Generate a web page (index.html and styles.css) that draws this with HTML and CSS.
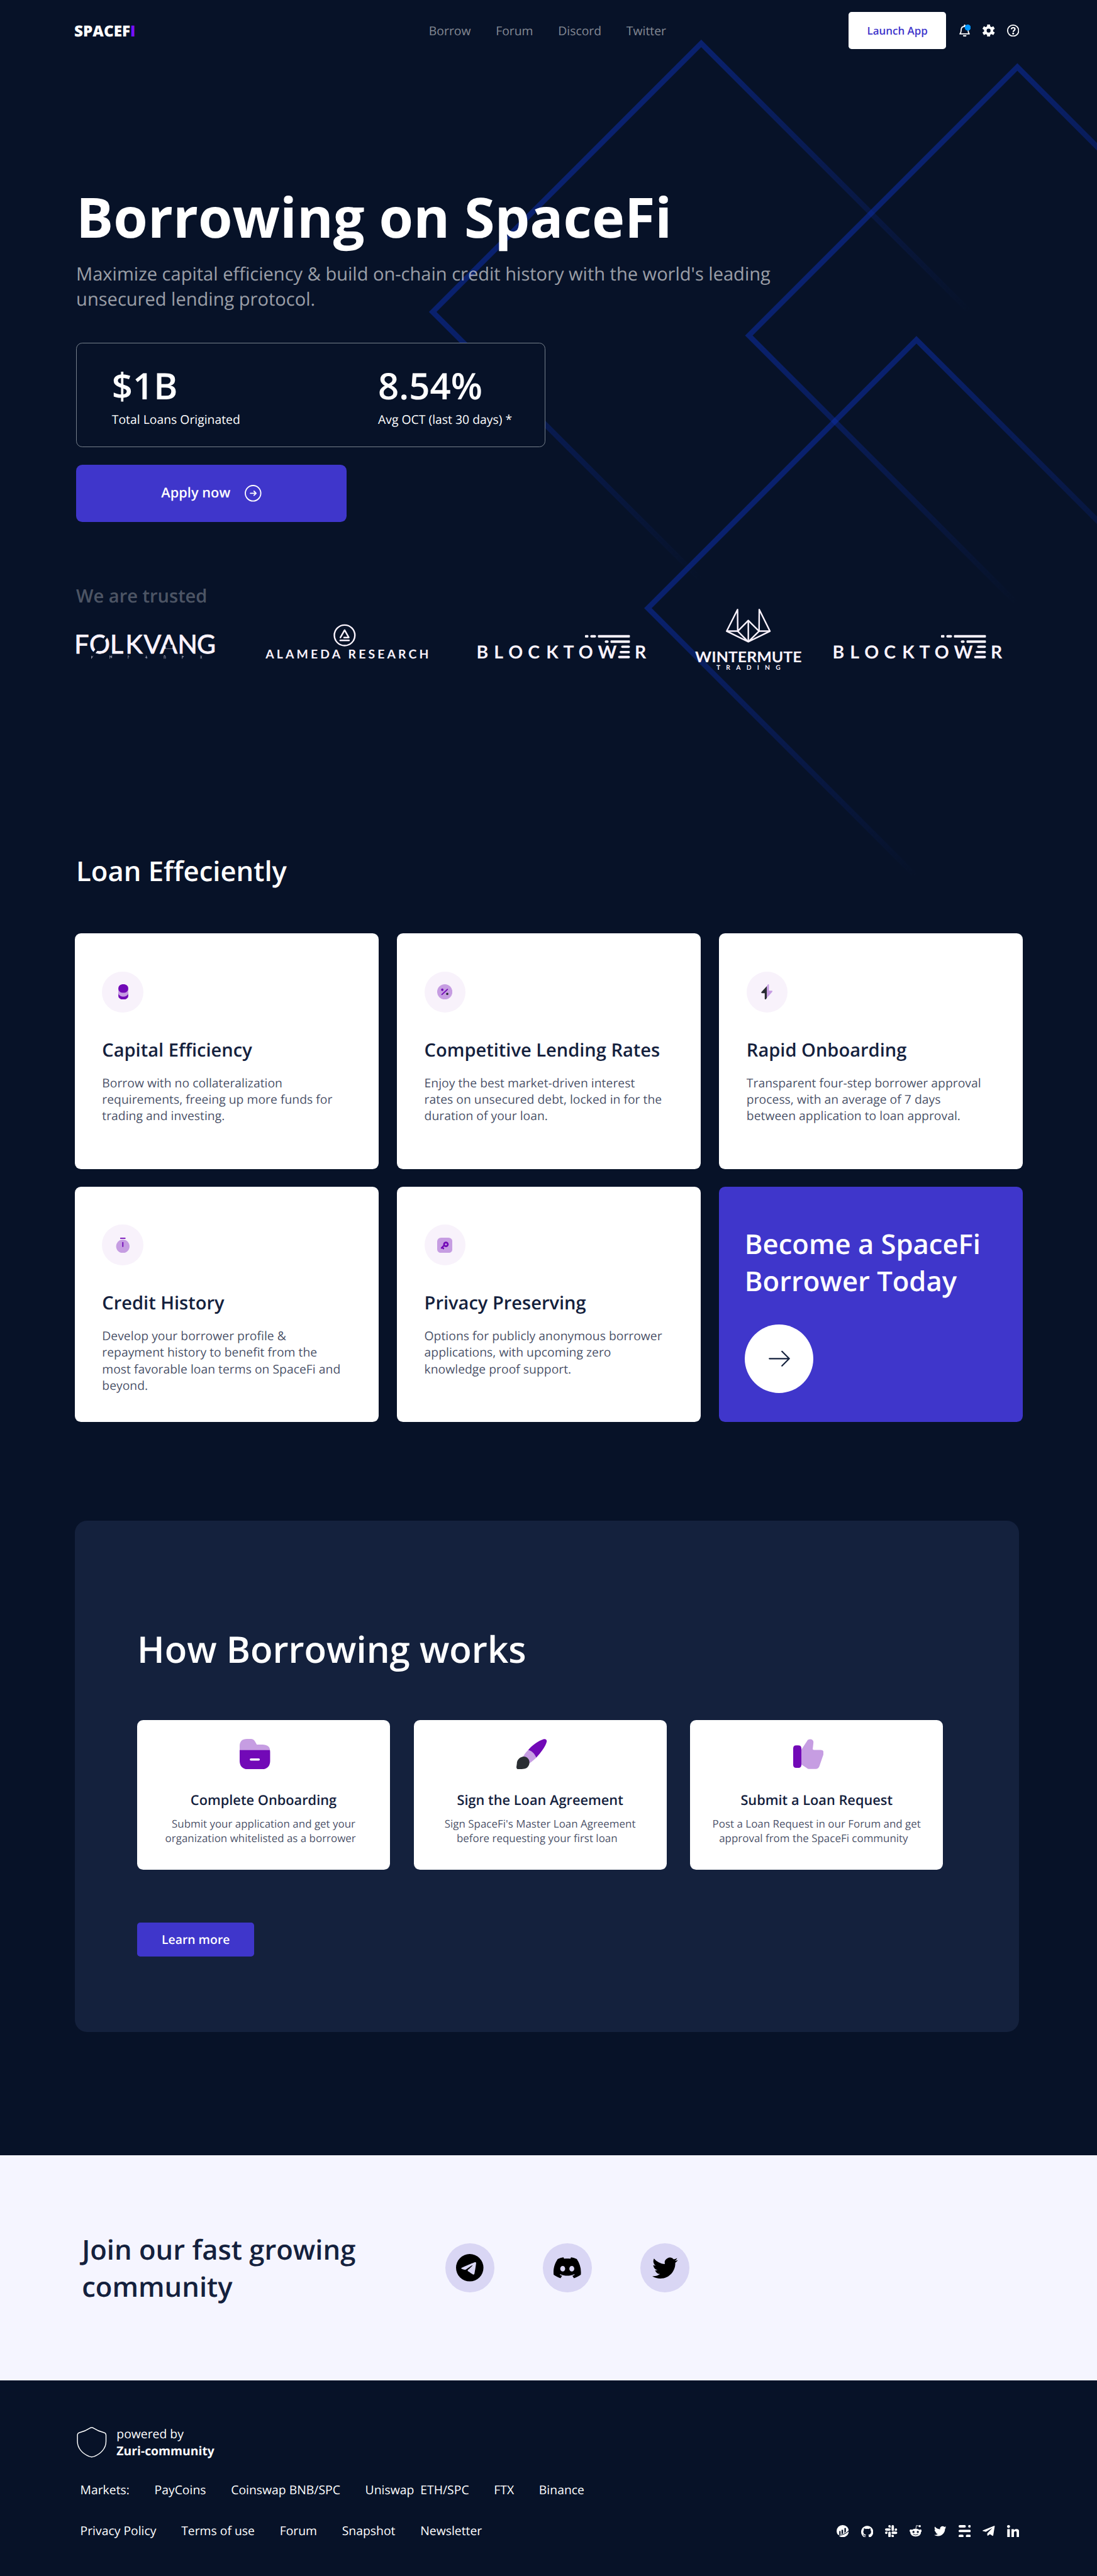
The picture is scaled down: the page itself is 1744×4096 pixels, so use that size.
FILE: index.html
```html
<!DOCTYPE html>
<html lang="en">
<head>
<meta charset="utf-8">
<title>SpaceFi – Borrowing</title>
<link rel="stylesheet" href="styles.css">
</head>
<body>
<svg class="defs" width="0" height="0" aria-hidden="true">
  <defs>
    <linearGradient id="diamondFade" gradientUnits="userSpaceOnUse" x1="352" y1="352" x2="1057" y2="1057">
      <stop offset="0" stop-color="#0c30b4" stop-opacity=".5"/>
      <stop offset="1" stop-color="#0c30b4" stop-opacity="0"/>
    </linearGradient>
    <symbol id="diamond" overflow="visible">
      <path d="M705 1410 L0 705 L705 0 L1410 705" fill="none" stroke="url(#diamondFade)" stroke-width="14"/>
    </symbol>
    <symbol id="blocktower" viewBox="1252 1598 448 162">
      <g fill="#faf3fd">
        <text class="logo-text" font-size="47" font-weight="700" y="1728" x="1251 1297 1335 1386 1434 1479 1519 1570 1666.500">BLOCKTOWR</text>
        <rect x="1536" y="1667" width="9" height="6.500" rx="2"/>
        <rect x="1550" y="1667" width="15" height="6.500" rx="3"/>
        <rect x="1570" y="1667" width="84" height="6.500" rx="2"/>
        <rect x="1588" y="1681" width="10" height="6.500" rx="3"/>
        <rect x="1603" y="1681" width="51" height="6.500" rx="2"/>
        <rect x="1631" y="1694.500" width="23" height="6.500" rx="3"/>
        <rect x="1627" y="1708.500" width="27" height="6.500" rx="3"/>
        <rect x="1623" y="1721.500" width="31" height="6.500" rx="3"/>
      </g>
    </symbol>
    <symbol id="twitter" viewBox="0 0 24 24">
      <path d="M23.953 4.57a10 10 0 01-2.825.775 4.958 4.958 0 002.163-2.723c-.951.555-2.005.959-3.127 1.184a4.92 4.92 0 00-8.384 4.482C7.69 8.095 4.067 6.13 1.64 3.162a4.822 4.822 0 00-.666 2.475c0 1.71.87 3.213 2.188 4.096a4.904 4.904 0 01-2.228-.616v.06a4.923 4.923 0 003.946 4.827 4.996 4.996 0 01-2.212.085 4.936 4.936 0 004.604 3.417 9.867 9.867 0 01-6.102 2.105c-.39 0-.779-.023-1.17-.067a13.995 13.995 0 007.557 2.209c9.053 0 13.998-7.496 13.998-13.985 0-.21 0-.42-.015-.63A9.935 9.935 0 0024 4.59z"/>
    </symbol>
  </defs>
</svg>

<main class="page">
  <svg class="lines" viewBox="0 0 2880 2400" aria-hidden="true">
    <use href="#diamond" x="1136" y="114"/>
    <use href="#diamond" x="1966" y="176"/>
    <use href="#diamond" x="1701" y="892"/>
  </svg>

  <header class="header">
    <a class="brand">SPACEF<span>I</span></a>
    <nav class="nav"><a>Borrow</a><a>Forum</a><a>Discord</a><a>Twitter</a></nav>
    <div class="actions">
      <button class="launch">Launch App</button>
      <svg class="icon" viewBox="0 0 32 32">
        <path d="M3.500 24.600c2.300-2.300 3-4.500 3-9.100 0-6 2.600-10.500 9.500-10.500s9 4.500 9 10.500c0 4.600.7 6.800 3 9.100z" fill="none" stroke="#fff" stroke-width="3" stroke-linejoin="round"/>
        <rect x="14" y="0" width="4" height="6" rx="2" fill="#fff"/>
        <path d="M11.500 28h9a4.500 4.500 0 0 1-9 0z" fill="#fff"/>
        <circle cx="24" cy="8" r="8" fill="#0096ff"/>
      </svg>
      <svg class="icon" viewBox="0 0 32 32">
        <g fill="#fff"><circle cx="16" cy="16" r="12"/>
          <rect x="12" y="0" width="8" height="32" rx="1.200"/>
          <rect x="12" y="-.5" width="8" height="33" rx="1.200" transform="rotate(60 16 16)"/>
          <rect x="12" y="-.5" width="8" height="33" rx="1.200" transform="rotate(120 16 16)"/></g>
        <circle cx="16" cy="16" r="5.200" fill="#071228"/>
      </svg>
      <svg class="icon" viewBox="0 0 32 32" fill="none" stroke="#fff" stroke-width="3">
        <circle cx="16" cy="16" r="14.500"/>
        <path d="M11.500 12.500c0-2.700 2-4.300 4.600-4.300s4.700 1.500 4.700 3.900c0 3.400-4.600 3.500-4.600 7.300" stroke-width="3.600"/>
        <circle cx="16.100" cy="23.400" r="2.500" fill="#fff" stroke="none"/>
      </svg>
    </div>
  </header>

  <section class="hero">
    <h1>Borrowing on SpaceFi</h1>
    <p class="lead">Maximize capital efficiency &amp; build on-chain credit history with the world's leading<br>unsecured lending protocol.</p>
    <div class="stats">
      <div class="stat"><strong>$1B</strong><span>Total Loans Originated</span></div>
      <div class="stat"><strong>8.54%</strong><span>Avg OCT (last 30 days) *</span></div>
    </div>
    <button class="apply">Apply now
      <svg viewBox="0 0 44 44" fill="none" stroke="#fff" stroke-width="3" stroke-linecap="round" stroke-linejoin="round">
        <circle cx="22" cy="22" r="20.300"/><path d="M15 22h14M24.500 16.500 30 22l-5.500 5.500"/>
      </svg>
    </button>
    <p class="trusted">We are trusted</p>
    <div class="logos">
      <svg class="logo-folkvang" viewBox="190 1598 380 162" fill="#faf3fd">
        <text class="logo-text" font-size="67.800" y="1715.700" x="195.500 234.500 289 329.500 377.300 420 466.500 517" stroke="#faf3fd" stroke-width="1.400">FOLKVANG</text>
        <path d="M245 1717l36-48" stroke="#071228" stroke-width="6.500"/>
        <path d="M435 1697.500h18" stroke="#071228" stroke-width="10"/>
        <g fill="none" stroke="#b9b8c6" stroke-width="1.200">
          <path d="M240.500 1729v-7.500M240.500 1725.500l4-4M240.500 1727.500l3-3M288.500 1729v-8l4 3.500 1-3.500v6l-5-4M336.500 1729v-8l3 3M384 1721v8M381 1726l6-1M384 1725l3 3M431 1729v-8h2l1.500 3v5M478.500 1729v-8M478.500 1726l4-4M479 1722l3 3M526 1721l4 4-4 4M530 1721l-4 4 4 4"/>
        </g>
      </svg>
      <svg class="logo-alameda" viewBox="696 1598 434 162" fill="#faf3fd">
        <g fill="none" stroke="#faf3fd" stroke-width="4" stroke-linecap="round" stroke-linejoin="round">
          <circle cx="905.500" cy="1667.700" r="27"/>
          <path d="M894.500 1673.500l11-19.500 11 19.500H904"/><path d="M894 1681h23"/>
        </g>
        <text class="logo-text" font-size="32" font-weight="700" x="698" y="1728.600" textLength="428">ALAMEDA RESEARCH</text>
      </svg>
      <svg class="logo-blocktower" viewBox="0 0 448 162"><use href="#blocktower" width="448" height="162"/></svg>
      <svg class="logo-wintermute" viewBox="1820 1598 290 162" fill="#faf3fd">
        <g fill="none" stroke="#faf3fd" stroke-width="4" stroke-linejoin="round">
          <path d="M1936.500 1600l-28.500 56.700h29zM1993.500 1600l28 56.700h-28.500z"/>
          <path d="M1908 1656.700l56.700 28 56.800-28M1937 1656.700l27.700-28 28.300 28-28.300 28z"/>
          <path d="M1964.700 1628v57"/>
        </g>
        <text class="logo-text" font-size="39" font-weight="700" x="1825" y="1738" textLength="280" lengthAdjust="spacingAndGlyphs">WINTERMUTE</text>
        <text class="logo-text" font-size="17" font-weight="700" x="1881" y="1758.400" textLength="168">TRADING</text>
      </svg>
      <svg class="logo-blocktower last" viewBox="0 0 448 162"><use href="#blocktower" width="448" height="162"/></svg>
    </div>
  </section>

  <section class="loans">
    <h2>Loan Effeciently</h2>
    <div class="cards">
      <article class="card">
        <span class="badge"><svg viewBox="0 0 40 40">
          <path d="M7 22v9c0 5 5.500 9.500 13 9.500S33 36 33 31v-9z" fill="#7209b7" transform="translate(1.500 0)"/>
          <path d="M7 12v13c2 4.500 7 7.500 13 7.500s11-3 13-7.500V12z" fill="#c69de2" transform="translate(1.500 0)"/>
          <path d="M8.500 11C8.500 4 14 0 21.500 0s13 4 13 11-5.500 11.500-13 11.500S8.500 18 8.500 11z" fill="#7209b7"/>
        </svg></span>
        <h3>Capital Efficiency</h3>
        <p>Borrow with no collateralization<br>requirements, freeing up more funds for<br>trading and investing.</p>
      </article>
      <article class="card">
        <span class="badge"><svg viewBox="0 0 40 40">
          <circle cx="20" cy="20" r="20" fill="#c69de2"/>
          <path d="M12.500 27L27 13.500" stroke="#7209b7" stroke-width="3" stroke-linecap="round"/>
          <circle cx="13.500" cy="14.500" r="3.200" fill="#7209b7"/><circle cx="26.500" cy="25.500" r="3" fill="#292d32"/>
        </svg></span>
        <h3>Competitive Lending Rates</h3>
        <p>Enjoy the best market-driven interest<br>rates on unsecured debt, locked in for the<br>duration of your loan.</p>
      </article>
      <article class="card">
        <span class="badge"><svg viewBox="0 0 40 40">
          <path d="M20 5v31l-2.500 3.500c-1.500 1.500-3 .7-3-1.500V23.500H7.500c-2.500 0-2.800-1.500-1.500-3.300z" fill="#292d32"/>
          <path d="M20 5l2.500-4c1.400-1.500 3-1 3 1.500V17h7c2.500 0 2.800 1.500 1.500 3.300L20 36z" fill="#c69de2"/>
        </svg></span>
        <h3>Rapid Onboarding</h3>
        <p>Transparent four-step borrower approval<br>process, with an average of 7 days<br>between application to loan approval.</p>
      </article>
      <article class="card">
        <span class="badge"><svg viewBox="0 0 40 40">
          <circle cx="20.300" cy="22.700" r="17.600" fill="#c69de2"/>
          <path d="M20.300 12.500V23M14.500 1.500h11.500" stroke="#7209b7" stroke-width="3" stroke-linecap="round"/>
        </svg></span>
        <h3>Credit History</h3>
        <p>Develop your borrower profile &amp;<br>repayment history to benefit from the<br>most favorable loan terms on SpaceFi and<br>beyond.</p>
      </article>
      <article class="card">
        <span class="badge"><svg viewBox="0 0 40 40">
          <rect width="40" height="40" rx="10" fill="#c69de2"/>
          <circle cx="23" cy="17.500" r="5" fill="none" stroke="#7209b7" stroke-width="4.500"/>
          <path d="M18 20.500L11.500 27M13 25.500l3.500 3" stroke="#7209b7" stroke-width="4" stroke-linecap="round"/>
        </svg></span>
        <h3>Privacy Preserving</h3>
        <p>Options for publicly anonymous borrower<br>applications, with upcoming zero<br>knowledge proof support.</p>
      </article>
      <article class="cta">
        <h2>Become a SpaceFi<br>Borrower Today</h2>
        <a class="go"><svg viewBox="0 0 56 44" fill="none" stroke="#14213d" stroke-width="3.600" stroke-linecap="round" stroke-linejoin="round"><path d="M2 22h52M35 3l19 19-19 19"/></svg></a>
      </article>
    </div>
  </section>

  <section class="how">
    <h2>How Borrowing works</h2>
    <div class="steps">
      <article class="step">
        <svg viewBox="0 0 80 80">
          <path d="M0 30V19C0 6 7 0 19 0h10c6 0 8 2 11 6l5 9h15c12 0 20 6 19.500 15z" fill="#c69de2"/>
          <path d="M0 29.500h79.500c.5 3 .5 6 .5 10V57c0 15-8 23-23 23H23C8 80 0 72 0 57z" fill="#7209b7"/>
          <rect x="26.500" y="51" width="26.500" height="6" rx="3" fill="#fff"/>
        </svg>
        <h3>Complete Onboarding</h3>
        <p>Submit your application and get your<br><span>organization whitelisted as a borrower</span></p>
      </article>
      <article class="step">
        <svg viewBox="0 0 80 80">
          <path d="M31 29C40 18 58 5 72 .6c5-1.600 8.500 2 7.500 7C76 21 63 38 52 49z" fill="#7209b7"/>
          <path d="M31 29c-6 6-11 13-15 20l16 16c7-4 14-10 20-16-4-10-11-17-21-20z" fill="#c69de2"/>
          <path d="M29 74.500c5-5 6.500-12 4-19C30 48 21 44 13 48 5 51 1.500 58 1.300 64L0 74c0 4 3 6.500 7 6l10-1c5-.4 9-1.500 12-4.500z" fill="#292d32"/>
        </svg>
        <h3>Sign the Loan Agreement</h3>
        <p>Sign SpaceFi's Master Loan Agreement<br><span>before requesting your first loan</span></p>
      </article>
      <article class="step">
        <svg viewBox="0 0 80 80">
          <path d="M21 29L36 6c2-4 6-6 10-5 6 1 8 5 7 10l-1.500 14c-.5 2.500.5 4 3 4H72c6 0 9 4 8 10l-11 32c-1.500 5-5 8-10 8H42c-3 0-5-1-7-3L21 67z" fill="#c69de2"/>
          <path d="M0 25c0-5 2.500-8 8-8h5.500c5.500 0 8 3 8 8v43c0 5-2.500 8-8 8H8c-5.500 0-8-3-8-8z" fill="#7209b7"/>
        </svg>
        <h3>Submit a Loan Request</h3>
        <p>Post a Loan Request in our Forum and get<br><span>approval from the SpaceFi community</span></p>
      </article>
    </div>
    <button class="learn">Learn more</button>
  </section>
</main>

<section class="join">
  <h2>Join our fast growing<br>community</h2>
  <div class="circles">
    <a class="social"><svg viewBox="0 0 24 24"><path d="M11.944 0A12 12 0 0 0 0 12a12 12 0 0 0 12 12 12 12 0 0 0 12-12A12 12 0 0 0 12 0a12 12 0 0 0-.056 0zm4.962 7.224c.1-.002.321.023.465.14a.506.506 0 0 1 .171.325c.016.093.036.306.02.472-.18 1.898-.962 6.502-1.360 8.627-.168.9-.499 1.201-.82 1.230-.696.065-1.225-.46-1.900-.902-1.056-.693-1.653-1.124-2.678-1.800-1.185-.78-.417-1.210.258-1.910.177-.184 3.247-2.977 3.307-3.230.007-.032.014-.15-.056-.212s-.174-.041-.249-.024c-.106.024-1.793 1.140-5.061 3.345-.48.33-.913.49-1.302.48-.428-.008-1.252-.241-1.865-.44-.752-.245-1.349-.374-1.297-.789.027-.216.325-.437.893-.663 3.498-1.524 5.830-2.529 6.998-3.014 3.332-1.386 4.025-1.627 4.476-1.635z"/></svg></a>
    <a class="social"><svg viewBox="0 0 24 24"><path d="M20.317 4.3698a19.7913 19.7913 0 00-4.8851-1.5152.0741.0741 0 00-.0785.0371c-.211.3753-.4447.8648-.6083 1.2495-1.8447-.2762-3.68-.2762-5.4868 0-.1636-.3933-.4058-.8742-.6177-1.2495a.077.077 0 00-.0785-.037 19.7363 19.7363 0 00-4.8852 1.515.0699.0699 0 00-.0321.0277C.5334 9.0458-.319 13.5799.0992 18.0578a.0824.0824 0 00.0312.0561c2.0528 1.5076 4.0413 2.4228 5.9929 3.0294a.0777.0777 0 00.0842-.0276c.4616-.6304.8731-1.2952 1.226-1.9942a.076.076 0 00-.0416-.1057c-.6528-.2476-1.2743-.5495-1.8722-.8923a.077.077 0 01-.0076-.1277c.1258-.0943.2517-.1923.3718-.2914a.0743.0743 0 01.0776-.0105c3.9278 1.7933 8.18 1.7933 12.0614 0a.0739.0739 0 01.0785.0095c.1202.099.246.1981.3728.2924a.077.077 0 01-.0066.1276 12.2986 12.2986 0 01-1.873.8914.0766.0766 0 00-.0407.1067c.3604.698.7719 1.3628 1.225 1.9932a.076.076 0 00.0842.0286c1.961-.6067 3.9495-1.5219 6.0023-3.0294a.077.077 0 00.0313-.0552c.5004-5.177-.8382-9.6739-3.5485-13.6604a.061.061 0 00-.0312-.0286zM8.02 15.3312c-1.1825 0-2.1569-1.0857-2.1569-2.419 0-1.3332.9555-2.4189 2.157-2.4189 1.2108 0 2.1757 1.0952 2.1568 2.419 0 1.3332-.9555 2.4189-2.1569 2.4189zm7.9748 0c-1.1825 0-2.1569-1.0857-2.1569-2.419 0-1.3332.9554-2.4189 2.1569-2.4189 1.2108 0 2.1757 1.0952 2.1568 2.419 0 1.3332-.946 2.4189-2.1568 2.4189Z"/></svg></a>
    <a class="social bird"><svg viewBox="0 0 24 24"><use href="#twitter"/></svg></a>
  </div>
</section>

<footer class="footer">
  <div class="powered">
    <svg viewBox="0 0 80 80" fill="none" stroke="#fff" stroke-width="2.400" stroke-linejoin="round"><path d="M34.500 3.500q5.500-4 11 0C53 8.500 61 12 71 14.500q6.500 1.500 6.500 7.500v16c0 18-13 32-31 39.500q-6.500 2.500-13 0C15.500 70 2.500 56 2.500 38V22q0-6 6.500-7.500c10-2.500 18-6 25.500-11z"/></svg>
    <p>powered by<br><b>Zuri-community</b></p>
  </div>
  <div class="links"><span>Markets:</span><a>PayCoins</a><a>Coinswap BNB/SPC</a><a>Uniswap&nbsp; ETH/SPC</a><a>FTX</a><a>Binance</a></div>
  <div class="bottom">
    <div class="links"><a>Privacy Policy</a><a>Terms of use</a><a>Forum</a><a>Snapshot</a><a>Newsletter</a></div>
    <div class="icons">
      <svg class="icon" viewBox="0 0 32 32"><circle cx="16" cy="16" r="16" fill="#fff"/>
        <path d="M7 15.500h3.500V25L7 26zM13 12.500h4v10l-4 1.500zM20.500 8h4v9.500l-4 3.500z" fill="#071228"/>
        <path d="M3 27.500C14 27 24 23.500 32 15" stroke="#071228" stroke-width="2" fill="none"/>
        <path d="M0 25l6.500 5 1-3.500z" fill="#071228"/></svg>
      <svg class="icon" viewBox="0 0 24 24" fill="#fff"><path transform="translate(0 1.300)" d="M12 .297c-6.630 0-12 5.373-12 12 0 5.303 3.438 9.800 8.205 11.385.6.113.82-.258.82-.577 0-.285-.01-1.040-.015-2.040-3.338.724-4.042-1.610-4.042-1.610C4.422 18.070 3.633 17.700 3.633 17.700c-1.087-.744.084-.729.084-.729 1.205.084 1.838 1.236 1.838 1.236 1.070 1.835 2.809 1.305 3.495.998.108-.776.417-1.305.76-1.605-2.665-.3-5.466-1.332-5.466-5.930 0-1.310.465-2.380 1.235-3.220-.135-.303-.54-1.523.105-3.176 0 0 1.005-.322 3.300 1.230.96-.267 1.980-.399 3-.405 1.020.006 2.040.138 3 .405 2.280-1.552 3.285-1.230 3.285-1.230.645 1.653.24 2.873.12 3.176.765.84 1.230 1.910 1.230 3.220 0 4.610-2.805 5.625-5.475 5.920.42.36.81 1.096.81 2.220 0 1.606-.015 2.896-.015 3.286 0 .315.21.69.825.57C20.565 22.092 24 17.592 24 12.297c0-6.627-5.373-12-12-12"/></svg>
      <svg class="icon" viewBox="0 0 32 32" fill="#fff">
        <rect x="17" y="0" width="6.500" height="15.500" rx="3.250"/><rect x="0" y="8.500" width="15" height="6.500" rx="3.250"/>
        <rect x="8.500" y="16.800" width="6.500" height="15.200" rx="3.250"/><rect x="17" y="17" width="15" height="6.500" rx="3.250"/>
        <path d="M15 6.500V3.200a3.200 3.200 0 1 0-3.200 3.300zM25.500 15V11.700a3.200 3.200 0 1 1 3.300 3.300zM17 25.500v3.300a3.200 3.200 0 1 0 3.200-3.300zM6.500 17v3.300A3.200 3.200 0 1 1 3.200 17z"/></svg>
      <svg class="icon" viewBox="0 0 32 32" fill="#fff"><ellipse cx="16" cy="20" rx="14" ry="10.300"/><circle cx="3.600" cy="15" r="3.600"/><circle cx="28.400" cy="15" r="3.600"/>
        <path d="M16.500 10L18 1.200l8 1.600" fill="none" stroke="#fff" stroke-width="1.500"/><circle cx="26.800" cy="3" r="2.800"/>
        <circle cx="10.300" cy="18" r="2.800" fill="#071228"/><circle cx="21.700" cy="18" r="2.800" fill="#071228"/>
        <path d="M10 24.500q6 3.500 12 0" fill="none" stroke="#071228" stroke-width="1.500" stroke-linecap="round"/></svg>
      <svg class="icon" viewBox="0 0 24 24" fill="#fff"><use href="#twitter"/></svg>
      <svg class="icon" viewBox="0 0 32 32" fill="#fff"><rect width="19" height="6.500" rx="3.200"/><rect x="25" width="7" height="6.500" rx="3.200"/><rect y="12.200" width="32" height="6.500" rx="3.200"/><rect y="25.200" width="13" height="6.800" rx="3.200"/><rect x="19" y="25.200" width="13" height="6.800" rx="3.200"/></svg>
      <svg class="icon" viewBox="0 0 32 32" fill="#fff"><path d="M.8 14L30.500 2.200q1.800-.5 1.500 1.300L28.200 27q-.5 2-2.200 1l-6.500-4-5 3.800q-2 .5-2-2v-4L26 7.500 8.800 17.800l-8-2.200q-1.500-.8 0-1.600z"/></svg>
      <svg class="icon" viewBox="0 0 32 32" fill="#fff"><circle cx="3.900" cy="3.900" r="3.900"/><rect x=".5" y="10.700" width="6.800" height="21.300"/><path d="M11.500 10.700H18v3c1.200-2 3.500-3.500 6.800-3.500 5.800 0 7.200 3.800 7.200 9V32h-6.800V20.800c0-2.700-.3-4.800-3.200-4.800s-3.800 2-3.800 4.800V32h-6.700z"/></svg>
    </div>
  </div>
</footer>
</body>
</html>
```

FILE: styles.css
```css
/* 1rem is ten units of the 1440-wide layout grid */
html { font-size: 12.1111px; }

* { box-sizing: border-box; margin: 0; padding: 0; }

body {
  background: #071228;
  color: #fff;
  font-family: "Open Sans", "Noto Sans", sans-serif;
  font-size: 1.6rem;
  line-height: 1.362;
  text-rendering: geometricPrecision;
}

button { font: inherit; border: 0; text-rendering: inherit; }
svg { display: block; flex: none; }
h2, h3 { font-weight: 600; }
.defs { position: absolute; }
.icon { width: 1.6rem; height: 1.6rem; }
.logo-text { font-family: Lato, sans-serif; }

.page { position: relative; height: 283rem; overflow: hidden; }
.lines { position: absolute; left: 0; top: 0; width: 144rem; height: 120rem; }

/* header */
.header {
  position: relative;
  display: grid;
  grid-template-columns: 46.55rem 1fr auto;
  align-items: center;
  padding: 1.6rem 10.2rem 0 9.75rem;
}
.brand { font-size: 2rem; font-weight: 800; padding-top: .25rem; }
.brand span { color: #7610ff; }
.nav { display: flex; gap: 3.28rem; padding-top: .1rem; color: rgba(255, 255, 255, .5); }
.actions { display: flex; align-items: center; gap: 1.6rem; }
.launch {
  width: 12.8rem; height: 4.8rem;
  border-radius: .4rem;
  background: #fff; color: #3f36cb;
  font-size: 1.4rem; font-weight: 600;
}

/* hero */
.hero { position: relative; padding: 17.03rem 0 0 10rem; }
h1 { font-size: 7.28rem; font-weight: 700; }
.lead { margin-top: 1rem; font-size: 2.4rem; color: rgba(255, 255, 255, .6); }
.stats {
  display: flex;
  width: 61.6rem; height: 13.7rem;
  margin-top: 4.13rem;
  padding: 2.33rem 4.6rem 0;
  border: 1px solid #76808c;
  border-radius: .8rem;
  background: #071228;
}
.stat { width: 34.95rem; flex: none; display: flex; flex-direction: column; }
.stat strong { font-size: 4.8rem; font-weight: 600; }
.apply {
  display: flex; align-items: center; justify-content: center; gap: 1.9rem;
  width: 35.5rem; height: 7.5rem;
  margin-top: 2.3rem;
  border-radius: .8rem;
  background: #3f36cb; color: #fff;
  font-size: 1.8rem; font-weight: 600;
}
.apply svg { width: 2.2rem; height: 2.2rem; }
.trusted { margin-top: 8.12rem; font-size: 2.4rem; font-weight: 600; color: rgba(255, 255, 255, .3); }
.logos { display: flex; }
.logos svg { height: 8.1rem; }
.logo-folkvang { width: 19rem; margin: 0 6.3rem 0 -.5rem; }
.logo-alameda { width: 21.7rem; margin-right: 6.1rem; }
.logo-blocktower { width: 22.4rem; margin-right: 6rem; }
.logo-wintermute { width: 14.5rem; margin-right: 3.8rem; }
.logos .last { margin-right: 0; }

/* loan cards */
.loans { position: relative; padding: 23.87rem 9.7rem 0 9.8rem; }
.loans > h2 { font-size: 3.6rem; padding-left: .2rem; }
.cards {
  display: grid;
  grid-template-columns: repeat(3, 39.9rem);
  grid-auto-rows: 30.9rem;
  gap: 2.32rem 2.4rem;
  margin-top: 5.8rem;
}
.card { padding: 4.98rem 0 0 3.6rem; border-radius: .8rem; background: #fff; color: #14213d; }
.badge {
  display: flex; align-items: center; justify-content: center;
  width: 5.4rem; height: 5.4rem;
  border-radius: 50%;
  background: #f8f2fb;
}
.badge svg { width: 2rem; height: 2rem; }
.card h3 { margin-top: 3.3rem; font-size: 2.4rem; }
.card p { margin-top: 1.58rem; color: rgba(20, 33, 61, .8); }
.cta { padding: 5.05rem 0 0 3.35rem; border-radius: .8rem; background: #3f36cb; }
.cta h2 { font-size: 3.6rem; }
.go {
  display: flex; align-items: center; justify-content: center;
  width: 9rem; height: 9rem;
  margin: 3.25rem 0 0 .05rem;
  border-radius: 50%;
  background: #fff;
}
.go svg { width: 2.8rem; height: 2.2rem; }

/* how it works */
.how {
  position: relative;
  width: 124rem; height: 67.1rem;
  margin: 13rem 0 0 9.8rem;
  padding: 13.57rem 0 0 8.2rem;
  border-radius: 1.6rem;
  background: #14213d;
}
.how h2 { font-size: 4.8rem; }
.steps { display: flex; gap: 3.1rem; margin-top: 6rem; }
.step {
  display: flex; flex-direction: column; align-items: center;
  width: 33.2rem; height: 19.7rem;
  padding-top: 2.5rem;
  border-radius: .8rem;
  background: #fff; color: #14213d;
  text-align: center;
}
.step svg { width: 4rem; height: 4rem; margin-right: 2.2rem; }
.step h3 { margin-top: 2.83rem; font-size: 1.8rem; }
.step p { margin-top: .87rem; font-size: 1.4rem; color: rgba(20, 33, 61, .8); }
.step p span { padding-right: .8rem; }
.learn {
  width: 15.4rem; height: 4.5rem;
  margin-top: 6.9rem;
  border-radius: .4rem;
  background: #3f36cb; color: #fff;
  font-weight: 600;
}

/* community */
.join { display: flex; align-items: center; height: 29.5rem; padding-left: 10.75rem; background: #f5f5ff; color: #14213d; }
.join h2 { width: 47.75rem; font-size: 3.6rem; }
.circles { display: flex; gap: 6.4rem; }
.social {
  display: flex; align-items: center; justify-content: center;
  width: 6.4rem; height: 6.4rem;
  border-radius: 50%;
  background: #d9d6f4;
}
.social svg { width: 3.6rem; height: 3.6rem; }
.social.bird svg { width: 3.36rem; height: 3.36rem; }

/* footer */
.footer { height: 25.7rem; padding: 5.98rem 10.2rem 0 10rem; }
.powered { display: flex; align-items: center; gap: 1.2rem; }
.powered svg { width: 4.1rem; height: 4rem; }
.links { display: flex; gap: 3.28rem; padding-left: .53rem; }
.powered + .links { margin-top: 2.95rem; }
.bottom { display: flex; justify-content: space-between; align-items: center; margin-top: 3.25rem; }
.icons { display: flex; gap: 1.6rem; }
```
